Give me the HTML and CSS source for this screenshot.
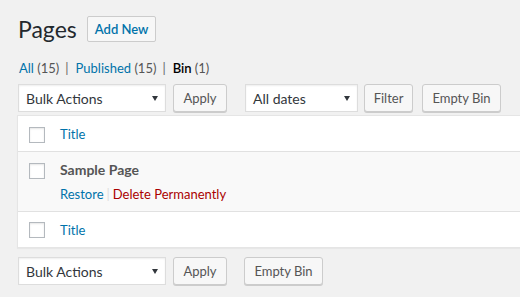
FILE: index.html
```html
<!DOCTYPE html>
<html>
<head>
<meta charset="utf-8">
<link rel="stylesheet" href="styles.css">
</head>
<body>
<div class="wrap">
  <div class="head">
    <h1 class="title">Pages</h1>
    <a class="add-new">Add New</a>
  </div>
  <ul class="subsub">
    <li><a class="link">All <span class="count">(15)</span></a><span class="sep">|</span></li>
    <li><a class="link">Published <span class="count">(15)</span></a><span class="sep">|</span></li>
    <li><a class="current">Bin <span class="count">(1)</span></a></li>
  </ul>
  <div class="tablenav">
    <div class="select bulk"><span>Bulk Actions</span><i class="arrow"></i></div>
    <button class="btn apply">Apply</button>
    <div class="select dates"><span>All dates</span><i class="arrow"></i></div>
    <button class="btn filter">Filter</button>
    <button class="btn empty">Empty Bin</button>
  </div>
  <div class="table">
    <div class="row thead">
      <div class="cb"><span class="check"></span></div>
      <div class="col"><a class="link">Title</a></div>
    </div>
    <div class="row item">
      <div class="cb"><span class="check"></span></div>
      <div class="col">
        <div class="row-title">Sample Page</div>
        <div class="row-actions"><a class="link">Restore</a><span class="bar">|</span><a class="delete">Delete Permanently</a></div>
      </div>
    </div>
    <div class="row tfoot">
      <div class="cb"><span class="check"></span></div>
      <div class="col"><a class="link">Title</a></div>
    </div>
  </div>
  <div class="tablenav bottom">
    <div class="select bulk"><span>Bulk Actions</span><i class="arrow"></i></div>
    <button class="btn apply">Apply</button>
    <button class="btn empty gap">Empty Bin</button>
  </div>
</div>
</body>
</html>
```

FILE: styles.css
```css
html, body {
  margin: 0;
  padding: 0;
  background: #f1f1f1;
  overflow: hidden;
}
body {
  font-family: "Lato", "Noto Sans", sans-serif;
  font-size: 13px;
  color: #444;
  width: 520px;
  height: 297px;
}
.wrap {
  padding: 14px 0 0 18px;
}
.head {
  display: flex;
  align-items: center;
  gap: 10px;
  height: 30px;
}
.title {
  margin: 0;
  font-size: 23px;
  font-weight: 400;
  line-height: 30px;
  color: #23282d;
}
.add-new {
  display: inline-block;
  height: 24px;
  line-height: 24px;
  padding: 0 7px 0 7px;
  border: 1px solid #ccc;
  border-radius: 2px;
  background: #f7f7f7;
  color: #0073aa;
  font-weight: 600;
  font-size: 13px;
}
.subsub {
  list-style: none;
  margin: 14px 0 0 1px;
  padding: 0;
  display: flex;
  line-height: 20px;
  color: #666;
}
.subsub li {
  display: flex;
}
.sep {
  margin: 0 7px 0 6px;
  color: #666;
}
.link {
  color: #0073aa;
}
.count {
  color: #555;
}
.current {
  color: #000;
  font-weight: 600;
}
.current .count {
  font-weight: 400;
}
.tablenav {
  display: flex;
  align-items: center;
  margin-top: 6px;
  height: 28px;
}
.select {
  box-sizing: border-box;
  height: 28px;
  background: #fff;
  border: 1px solid #ddd;
  box-shadow: inset 0 1px 2px rgba(0, 0, 0, 0.07);
  display: flex;
  align-items: center;
  justify-content: space-between;
  padding: 0 7px 0 7px;
  font-size: 14px;
  color: #32373c;
}
.arrow {
  width: 0;
  height: 0;
  border-left: 3px solid transparent;
  border-right: 3px solid transparent;
  border-top: 5px solid #32373c;
  margin-top: 1px;
}
.bulk {
  width: 148px;
  margin-right: 7px;
}
.dates {
  width: 113px;
  margin-left: 18px;
  margin-right: 6px;
}
.btn {
  box-sizing: border-box;
  height: 28px;
  padding: 0 10px 1px;
  border: 1px solid #ccc;
  border-radius: 3px;
  background: #f7f7f7;
  box-shadow: 0 1px 0 #ccc;
  color: #555;
  font-family: inherit;
  font-size: 13px;
  line-height: 26px;
}
.apply {
  width: 54px;
  padding: 0;
}
.filter {
  width: 49px;
  padding: 0;
}
.empty {
  width: 79px;
  padding: 0;
  margin-left: 9px;
}
.empty.gap {
  margin-left: 17px;
}
.table {
  margin: 3px 0 0 -1px;
  background: #fff;
  border: 1px solid #e5e5e5;
  border-right-width: 0;
  box-shadow: 0 1px 1px rgba(0, 0, 0, 0.04);
}
.row {
  display: flex;
}
.cb {
  width: 42px;
  padding-left: 11px;
  box-sizing: border-box;
  flex: none;
}
.check {
  display: block;
  box-sizing: border-box;
  width: 16px;
  height: 16px;
  border: 1px solid #b4b9be;
  background: #fff;
  box-shadow: inset 0 1px 2px rgba(0, 0, 0, 0.1);
}
.thead {
  height: 35px;
  align-items: center;
  border-bottom: 1px solid #e1e1e1;
}
.thead .check {
  margin-top: 3px;
}
.item {
  height: 59px;
  background: #f9f9f9;
}
.item .cb {
  padding-top: 11px;
}
.item .col {
  padding-top: 8px;
}
.row-title {
  font-size: 14px;
  font-weight: 700;
  color: #555;
  line-height: 20px;
}
.row-actions {
  margin-top: 4px;
  line-height: 20px;
  display: flex;
}
.bar {
  color: #ddd;
  margin: 0 3px;
}
.delete {
  color: #a00;
}
.tfoot {
  height: 35px;
  align-items: center;
  border-top: 1px solid #e1e1e1;
}
.tfoot .check {
  margin-top: 1px;
}
.bottom {
  margin-top: 9px;
}
```
